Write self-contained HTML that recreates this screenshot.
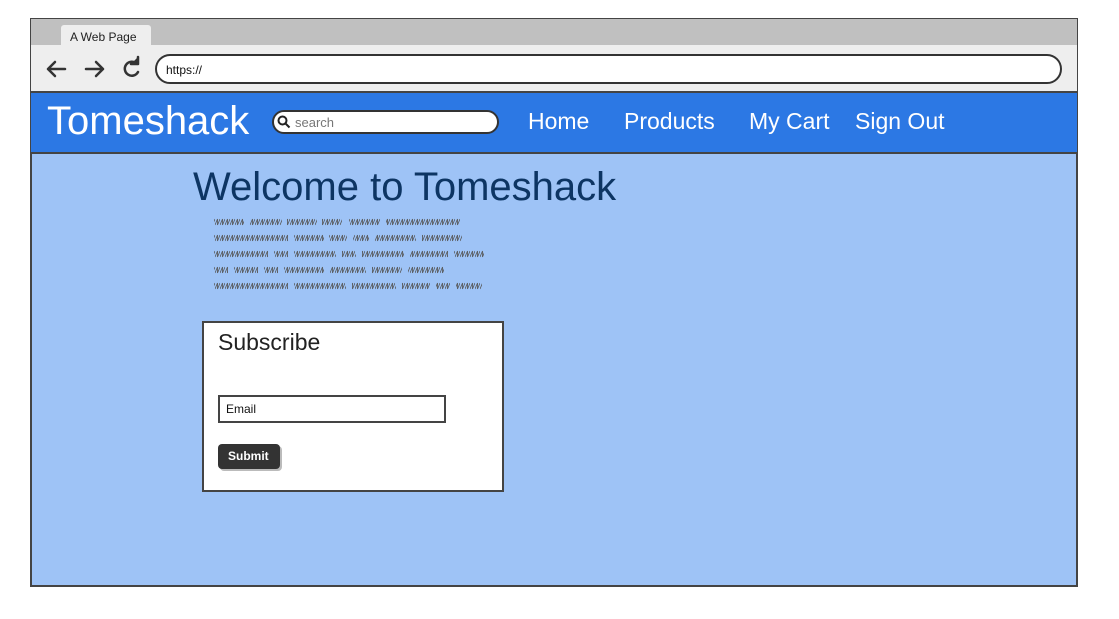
<!DOCTYPE html>
<html><head><meta charset="utf-8"><style>
*{margin:0;padding:0;box-sizing:border-box}
body{width:1119px;height:619px;background:#fff;position:relative;overflow:hidden;font-family:"Liberation Sans",sans-serif}
.a{position:absolute}
.nav{color:#fff;font-size:23px;top:108px}
</style></head><body>
<div class="a" style="left:30px;top:18px;width:1048px;height:569px;border:2px solid #444;background:#9ec3f6"></div>
<div class="a" style="left:31px;top:19px;width:1046px;height:27px;background:#c0c0c0"></div>
<div class="a" style="left:61px;top:25px;width:90px;height:21px;background:#eee;border-radius:3px 3px 0 0;font-size:12px;color:#222;padding:5px 0 0 9px">A Web Page</div>
<div class="a" style="left:31px;top:45px;width:1046px;height:46px;background:#eee"></div>
<svg class="a" style="left:40px;top:55px" width="110" height="30" fill="none" stroke="#333" stroke-width="2.5" stroke-linecap="round" stroke-linejoin="round">
<path d="M8 14H25M8 14l7-7M8 14l7 7"/><path d="M46 14H63M63 14l-7-7M63 14l-7 7"/>
<path d="M96.5 8.5a7 7 0 1 0 1.5 8.5"/><path d="M91 9h7v-7" fill="#333"/></svg>
<div class="a" style="left:155px;top:54px;width:907px;height:30px;border:2px solid #333;border-radius:15px;background:#fff;font-size:12px;padding:7px 0 0 9px;color:#111">https://</div>
<div class="a" style="left:31px;top:91px;width:1046px;height:63px;background:#2c78e4;border-top:2px solid #444;border-bottom:2px solid #444"></div>
<div class="a" style="left:47px;top:99px;color:#fff;font-size:40px">Tomeshack</div>
<div class="a" style="left:272px;top:110px;width:227px;height:24px;border:2px solid #333;border-radius:12px;background:#fff;font-size:13px;color:#777;padding:3px 0 0 21px">search</div>
<svg class="a" style="left:277px;top:115px" width="14" height="14" fill="none" stroke="#222" stroke-width="2"><circle cx="5.5" cy="5.5" r="4"/><path d="M8.5 8.5l4 4"/></svg>
<div class="a nav" style="left:528px">Home</div>
<div class="a nav" style="left:624px">Products</div>
<div class="a nav" style="left:749px">My Cart</div>
<div class="a nav" style="left:855px">Sign Out</div>
<div class="a" style="left:193px;top:165px;font-size:40px;color:#0d3563">Welcome to Tomeshack</div>
<svg class="a" style="left:210px;top:214px" width="290" height="80">
<defs><pattern id="z" width="5" height="16" patternUnits="userSpaceOnUse"><path d="M0 11L2.5 5L2.5 11L5 5" stroke="#555" stroke-width="0.8" fill="none"/></pattern></defs>
<g fill="url(#z)">
<rect x="4" y="4" width="30" height="8"/><rect x="40" y="4" width="32" height="8"/><rect x="77" y="4" width="30" height="8"/><rect x="112" y="4" width="20" height="8"/><rect x="139" y="4" width="31" height="8"/><rect x="176" y="4" width="74" height="8"/>
<rect x="4" y="20" width="74" height="8"/><rect x="84" y="20" width="30" height="8"/><rect x="119" y="20" width="18" height="8"/><rect x="143" y="20" width="16" height="8"/><rect x="165" y="20" width="41" height="8"/><rect x="212" y="20" width="40" height="8"/>
<rect x="4" y="36" width="54" height="8"/><rect x="64" y="36" width="14" height="8"/><rect x="84" y="36" width="42" height="8"/><rect x="132" y="36" width="14" height="8"/><rect x="152" y="36" width="42" height="8"/><rect x="200" y="36" width="38" height="8"/><rect x="244" y="36" width="30" height="8"/>
<rect x="4" y="52" width="14" height="8"/><rect x="24" y="52" width="24" height="8"/><rect x="54" y="52" width="14" height="8"/><rect x="74" y="52" width="40" height="8"/><rect x="120" y="52" width="36" height="8"/><rect x="162" y="52" width="30" height="8"/><rect x="198" y="52" width="36" height="8"/>
<rect x="4" y="68" width="74" height="8"/><rect x="84" y="68" width="52" height="8"/><rect x="142" y="68" width="44" height="8"/><rect x="192" y="68" width="28" height="8"/><rect x="226" y="68" width="14" height="8"/><rect x="246" y="68" width="26" height="8"/>
</g></svg>
<div class="a" style="left:202px;top:321px;width:302px;height:171px;border:2px solid #444;background:#fff"></div>
<div class="a" style="left:218px;top:329px;font-size:23px;color:#222">Subscribe</div>
<div class="a" style="left:218px;top:395px;width:228px;height:28px;border:2px solid #444;background:#fff;font-size:12px;padding:5px 0 0 6px;color:#111">Email</div>
<div class="a" style="left:218px;top:444px;width:62px;height:25px;border-radius:4px;background:#333;color:#fff;font-size:12px;font-weight:bold;padding:5px 0 0 10px;box-shadow:2px 2px 0 #bbb">Submit</div>
</body></html>
